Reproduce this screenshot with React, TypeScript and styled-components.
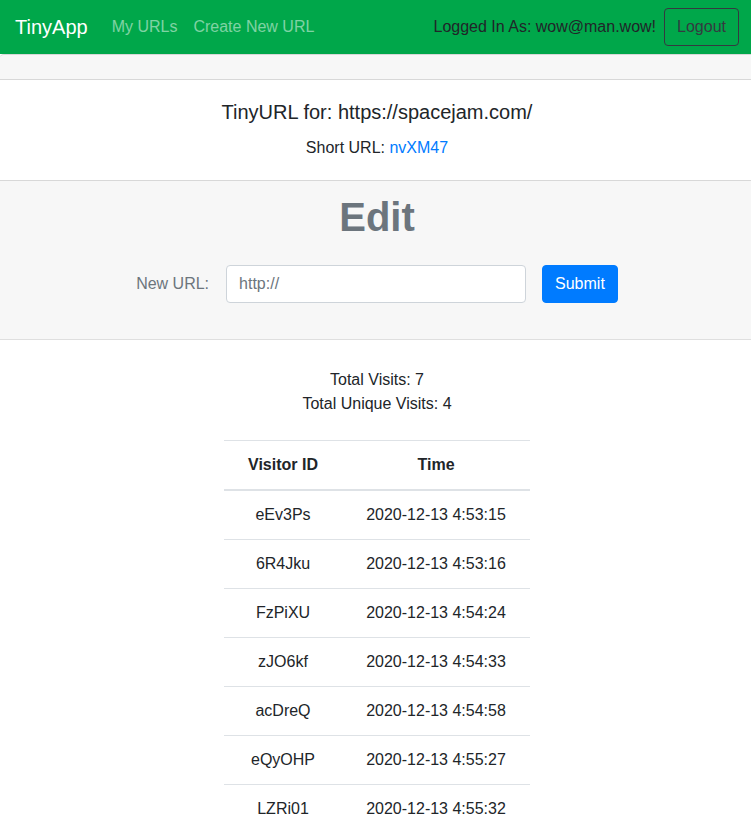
import React from "react";
import styled, { createGlobalStyle } from "styled-components";

const GlobalStyle = createGlobalStyle`
  html, body { margin: 0; padding: 0; background: #fff; }
  body {
    font-family: "Liberation Sans", Arial, sans-serif;
    font-size: 16px;
    line-height: 1.5;
    color: #212529;
  }
  * { box-sizing: border-box; }
`;

const Nav = styled.nav`
  display: flex;
  align-items: center;
  height: 54px;
  padding: 0 12px 0 15px;
  background: #00a74a;
`;

const Brand = styled.a`
  font-size: 20px;
  line-height: 30px;
  color: #fff;
  margin-right: 16px;
  text-decoration: none;
`;

const NavLink = styled.a`
  padding: 8px;
  color: rgba(255, 255, 255, 0.5);
  text-decoration: none;
`;

const Spacer = styled.div`
  flex: 1;
`;

const NavText = styled.span`
  color: #212529;
  margin-right: 8px;
`;

const OutlineButton = styled.button`
  font-family: inherit;
  font-size: 16px;
  line-height: 24px;
  height: 38px;
  padding: 6px 12px;
  background: transparent;
  color: #343a40;
  border: 1px solid #343a40;
  border-radius: 4px;
`;

const Card = styled.div`
  border-bottom: 1px solid rgba(0, 0, 0, 0.125);
  background: #fff;
  text-align: center;
`;

const CardHeader = styled.div`
  height: 26px;
  background: rgba(0, 0, 0, 0.03);
  border-top: 1px solid rgba(0, 0, 0, 0.125);
  border-bottom: 1px solid rgba(0, 0, 0, 0.125);
  border-radius: 4px 0 0 0;
`;

const CardBody = styled.div`
  padding: 20px 20px 20px 23px;
`;

const CardTitle = styled.h5`
  margin: 0 0 12px;
  font-size: 20px;
  font-weight: 500;
  line-height: 24px;
`;

const CardText = styled.p`
  margin: 0;
`;

const Link = styled.a`
  color: #007bff;
  text-decoration: none;
`;

const CardFooter = styled.div`
  background: rgba(0, 0, 0, 0.03);
  border-top: 1px solid rgba(0, 0, 0, 0.125);
  padding: 12px 20px 36px 23px;
`;

const EditTitle = styled.h1`
  margin: 0;
  font-size: 40px;
  font-weight: 700;
  line-height: 48px;
  color: #6c757d;
`;

const Form = styled.form`
  display: flex;
  justify-content: center;
  align-items: center;
  margin-top: 24px;
`;

const Label = styled.label`
  color: #6c757d;
  margin-right: 17px;
`;

const Input = styled.input`
  width: 300px;
  height: 38px;
  padding: 6px 12px;
  font-family: inherit;
  font-size: 16px;
  color: #495057;
  background: #fff;
  border: 1px solid #ced4da;
  border-radius: 4px;
  margin-right: 16px;
  &::placeholder { color: #6c757d; }
`;

const PrimaryButton = styled.button`
  font-family: inherit;
  font-size: 16px;
  line-height: 24px;
  height: 38px;
  padding: 6px 12px;
  color: #fff;
  background: #007bff;
  border: 1px solid #007bff;
  border-radius: 4px;
`;

const Main = styled.main`
  padding-left: 3px;
`;

const Stats = styled.section`
  display: flex;
  flex-direction: column;
  align-items: center;
  padding-top: 28px;
`;

const StatLine = styled.div`
  line-height: 24px;
`;

const Table = styled.table`
  margin: 24px auto 0;
  width: 306px;
  border-collapse: collapse;
  text-align: center;
`;

const Th = styled.th<{ $w: number }>`
  width: ${(p) => p.$w}px;
  padding: 12px;
  line-height: 24px;
  font-weight: 700;
  border-top: 1px solid #dee2e6;
  border-bottom: 2px solid #dee2e6;
`;

const Td = styled.td`
  padding: 12px;
  line-height: 24px;
  border-top: 1px solid #dee2e6;
`;

const visits = [
  ["eEv3Ps", "2020-12-13 4:53:15"],
  ["6R4Jku", "2020-12-13 4:53:16"],
  ["FzPiXU", "2020-12-13 4:54:24"],
  ["zJO6kf", "2020-12-13 4:54:33"],
  ["acDreQ", "2020-12-13 4:54:58"],
  ["eQyOHP", "2020-12-13 4:55:27"],
  ["LZRi01", "2020-12-13 4:55:32"],
];

export default function App() {
  return (
    <>
      <GlobalStyle />
      <Nav>
        <Brand href="#">TinyApp</Brand>
        <NavLink href="#">My URLs</NavLink>
        <NavLink href="#">Create New URL</NavLink>
        <Spacer />
        <NavText>Logged In As: wow@man.wow!</NavText>
        <OutlineButton type="button">Logout</OutlineButton>
      </Nav>
      <Card>
        <CardHeader />
        <CardBody>
          <CardTitle>TinyURL for: https://spacejam.com/</CardTitle>
          <CardText>
            Short URL: <Link href="#">nvXM47</Link>
          </CardText>
        </CardBody>
        <CardFooter>
          <EditTitle>Edit</EditTitle>
          <Form onSubmit={(e) => e.preventDefault()}>
            <Label>New URL:</Label>
            <Input type="text" placeholder="http://" />
            <PrimaryButton type="submit">Submit</PrimaryButton>
          </Form>
        </CardFooter>
      </Card>
      <Main>
        <Stats>
          <StatLine>Total Visits: 7</StatLine>
          <StatLine>Total Unique Visits: 4</StatLine>
        </Stats>
        <Table>
          <thead>
            <tr>
              <Th $w={118}>Visitor ID</Th>
              <Th $w={188}>Time</Th>
            </tr>
          </thead>
          <tbody>
            {visits.map(([id, t]) => (
              <tr key={id}>
                <Td>{id}</Td>
                <Td>{t}</Td>
              </tr>
            ))}
          </tbody>
        </Table>
      </Main>
    </>
  );
}
